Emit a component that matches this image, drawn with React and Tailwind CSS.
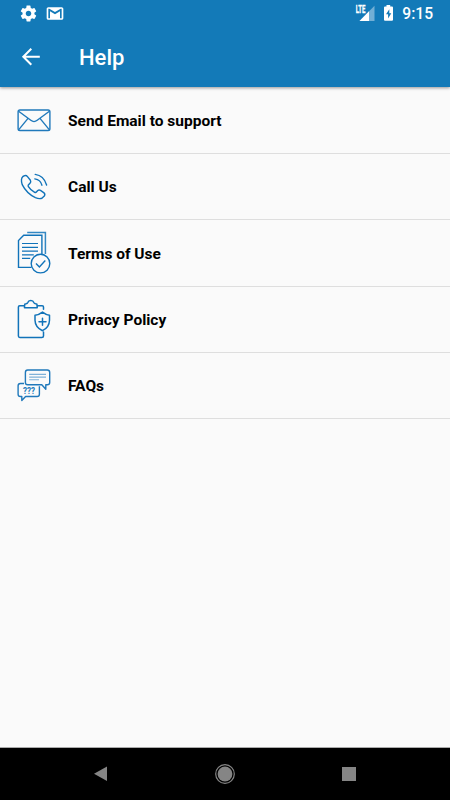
const EmailIcon = () => (
  <svg viewBox="0 -13 50 65" className="h-[65px] w-[50px] shrink-0 self-start" fill="none" stroke="#2079bb" strokeWidth="1.4">
    <rect x="8.1" y="10" width="31.8" height="20.5" rx="1.8" />
    <path d="M8.6 11.2 20.8 20.3q3.2 2.6 6.4 0L39.4 11.2M8.8 29.6 17.8 18.6M39.2 29.6 30.2 18.6" />
  </svg>
);

const CallIcon = () => (
  <svg viewBox="0 -11 50 65" className="h-[65px] w-[50px] shrink-0 self-start" fill="none" stroke="#1173b9" strokeWidth="1.4" strokeLinecap="round" strokeLinejoin="round">
    <path d="M12.9 11.5 14.7 10.7Q16.3 10.2 17.5 11.6L20.4 15.3Q21.3 16.8 20 18.2L18.3 20Q17.9 20.8 18.4 21.6 20.3 24.8 24.7 27.3 25.8 27.7 26.6 26.8L27.8 25.5Q29 24.6 30.5 25.4L34 27.9Q35.5 29.2 34.3 31L32.4 32.8Q29.9 34.5 25.4 32.6 16.7 28.5 12.2 19.6 10.4 13.8 12.9 11.5Z" />
    <path d="M25.2 9.4Q33.8 10.5 36.6 20M24.8 13.9Q30.6 14.8 31.9 20.2" />
  </svg>
);

const TermsIcon = () => (
  <svg viewBox="0 -5 50 65" className="h-[65px] w-[50px] shrink-0 self-start" fill="none" stroke="#1173b9" strokeWidth="1.4">
    <path d="M17.2 7.5H35.4V29" stroke="#3488c3" strokeWidth="1.5" />
    <path d="M21.5 42.4H8.5V15.5L13.7 10.3H31.9V29.3" />
    <path d="M12 18.5H28M12 22.4H28M12 26.2H28M12 29.9H23.8M12 33.4H20.2" strokeWidth="1.2" />
    <circle cx="30.5" cy="38.6" r="9.3" />
    <path d="m26 38.6 3.4 3.4 5.9-6.5" />
  </svg>
);

const PrivacyIcon = () => (
  <svg viewBox="0 -5 50 65" className="h-[65px] w-[50px] shrink-0 self-start" fill="none" stroke="#1173b9" strokeWidth="1.5" strokeLinecap="round" strokeLinejoin="round">
    <path d="M14.5 13.7H9.8Q8.4 13.7 8.4 15.1V44Q8.4 45.4 9.8 45.4H31.8Q33.5 45.4 33.5 43.9V40M27.2 13.7H32.2Q33.5 13.7 33.5 15.1V17.2" />
    <path d="M14.5 15.7V13.2Q14.5 11.9 16 11.8 17.4 11.6 17.8 10.5 18.4 8.5 20.8 8.5T23.8 10.5Q24.3 11.6 25.7 11.8 27.2 11.9 27.2 13.2V15.7Z" />
    <path d="M32.5 20.1Q36 22.8 39.5 23.3V28.2Q39.3 35.3 32.5 38.7 25.2 35.3 25 28.2V23.3Q29 22.8 32.5 20.1Z" />
    <path d="M32.5 26.2V33.2M29 29.7H36" />
  </svg>
);

const FaqIcon = () => (
  <svg viewBox="0 -7 50 65" className="h-[65px] w-[50px] shrink-0 self-start" fill="none" stroke="#2079bb" strokeWidth="1.4" strokeLinejoin="round">
    <path d="M17.7 10H37.3Q39.7 10 39.7 12.4V22.6Q39.7 24.8 37.3 24.8H35.8V29.2L31.8 24.8H17.7Q15.4 24.8 15.4 22.6V12.4Q15.4 10 17.7 10Z" />
    <path d="M19.2 14.4H36M19.2 17.1H36M19.2 19.7H29" stroke="#7fb1d8" strokeWidth="1.1" />
    <path d="M14 23.5H10.4Q8.1 23.5 8.1 25.8V34.2Q8.1 36.5 10.4 36.5H11.8V40.5L15.6 36.5H27.1Q29.4 36.5 29.4 34.2V26.3" />
    <text x="12.9" y="33.6" fill="#2079bb" stroke="none" fontSize="8.6" fontWeight="700" textLength="12" lengthAdjust="spacingAndGlyphs" fontFamily="Roboto, sans-serif">???</text>
  </svg>
);

const items = [
  { label: "Send Email to support", Icon: EmailIcon, height: "h-[67px]" },
  { label: "Call Us", Icon: CallIcon, height: "h-[66px]" },
  { label: "Terms of Use", Icon: TermsIcon, height: "h-[67px]" },
  { label: "Privacy Policy", Icon: PrivacyIcon, height: "h-[66px]" },
  { label: "FAQs", Icon: FaqIcon, height: "h-[66px]" },
];

const StatusBar = () => (
  <div className="flex h-[27px] items-center text-white">
    <svg viewBox="0 0 24 24" className="ml-[19px] h-[19px] w-[19px]" fill="currentColor">
      <path d="M19.43 12.98c.04-.32.07-.64.07-.98s-.03-.66-.07-.98l2.11-1.65c.19-.15.24-.42.12-.64l-2-3.46c-.12-.22-.39-.3-.61-.22l-2.49 1c-.52-.4-1.08-.73-1.69-.98l-.38-2.65A.49.49 0 0 0 14 2h-4c-.25 0-.46.18-.49.42l-.38 2.65c-.61.25-1.17.59-1.69.98l-2.49-1c-.23-.09-.49 0-.61.22l-2 3.46c-.13.22-.07.49.12.64l2.11 1.65c-.04.32-.07.65-.07.98s.03.66.07.98l-2.11 1.65c-.19.15-.24.42-.12.64l2 3.46c.12.22.39.3.61.22l2.49-1c.52.4 1.08.73 1.69.98l.38 2.65c.03.24.24.42.49.42h4c.25 0 .46-.18.49-.42l.38-2.65c.61-.25 1.17-.59 1.69-.98l2.49 1c.23.09.49 0 .61-.22l2-3.46c.12-.22.07-.49-.12-.64l-2.11-1.65zM12 15.5c-1.93 0-3.5-1.57-3.5-3.5s1.57-3.5 3.5-3.5 3.5 1.57 3.5 3.5-1.57 3.5-3.5 3.5z" />
    </svg>
    <svg viewBox="0 0 24 24" className="ml-[7px] h-[19px] w-[20px]" fill="currentColor" preserveAspectRatio="none">
      <path d="M20 4H4c-1.1 0-2 .9-2 2v12c0 1.1.9 2 2 2h16c1.1 0 2-.9 2-2V6c0-1.1-.9-2-2-2zm0 14h-2V9.2l-6 3.8-6-3.8V18H4V6h1.2l6.8 4.2L18.8 6H20v12z" />
    </svg>
    <svg viewBox="0 0 40 27" className="ml-auto h-[27px] w-[40px]">
      <path d="M20.5 5.8V21H5.5Z" fill="#72afd5" />
      <path d="M15 11.3V21H5.5Z" fill="#fff" />
      <rect x="0" y="4" width="11.8" height="9.8" fill="#137ab8" />
      <text x="1.7" y="12.8" fill="#fff" stroke="#fff" strokeWidth="0.3" fontSize="10.4" fontWeight="700" textLength="9.8" lengthAdjust="spacingAndGlyphs" fontFamily="Roboto, sans-serif">LTE</text>
      <path d="M32.5 5H36.2V6.5H38Q39 6.5 39 7.5V19.8Q39 20.8 38 20.8H31Q30 20.8 30 19.8V7.5Q30 6.5 31 6.5H32.5Z" fill="#fff" />
      <path d="M35.3 9.2 32 14.2H34.1V18.5L37.3 13.2H35.3Z" fill="#137ab8" />
    </svg>
    <span className="mr-[17px] ml-[8px] pt-px text-[15.6px] leading-[27px] font-medium">9:15</span>
  </div>
);

const App = () => {
  return (
    <div className="flex h-screen w-full flex-col bg-[#fafafa] font-['Roboto',sans-serif]">
      <header className="z-10 h-[87px] shrink-0 bg-[#137ab8] text-white shadow-[0_1px_3px_rgba(0,0,0,0.4)]">
        <StatusBar />
        <div className="flex h-[60px] items-center">
          <button className="ml-[21px] h-[20px] w-[20px]" aria-label="Back">
            <svg viewBox="0 0 20 20" className="h-5 w-5" fill="none" stroke="currentColor" strokeWidth="2">
              <path d="M18.8 9.8H2.5M10.3 1.8 2.3 9.8l8 8" />
            </svg>
          </button>
          <h1 className="ml-[38px] pt-[2px] text-[22px] leading-[60px] font-medium">Help</h1>
        </div>
      </header>

      <ul className="flex-1">
        {items.map(({ label, Icon, height }) => (
          <li key={label} className={`flex items-center border-b border-[#dedede] pl-[10px] ${height}`}>
            <Icon />
            <span className="ml-2 pt-px text-[15.5px] leading-[22px] font-bold text-black">{label}</span>
          </li>
        ))}
      </ul>

      <nav className="flex h-[53px] shrink-0 items-center border-t border-[#aaa] bg-black text-[#858585]">
        <svg viewBox="0 0 14 16" className="ml-[94px] h-[16px] w-[14px]" fill="currentColor">
          <path d="M13 .5V15L0 7.7Z" />
        </svg>
        <svg viewBox="0 0 20 20" className="ml-[107px] h-[20px] w-[20px]">
          <circle cx="10" cy="10" r="9.3" fill="none" stroke="currentColor" strokeWidth="1.2" />
          <circle cx="10" cy="10" r="7.4" fill="currentColor" />
        </svg>
        <div className="ml-[107px] h-[14px] w-[14px] bg-current" />
      </nav>
    </div>
  );
};

export default App;
